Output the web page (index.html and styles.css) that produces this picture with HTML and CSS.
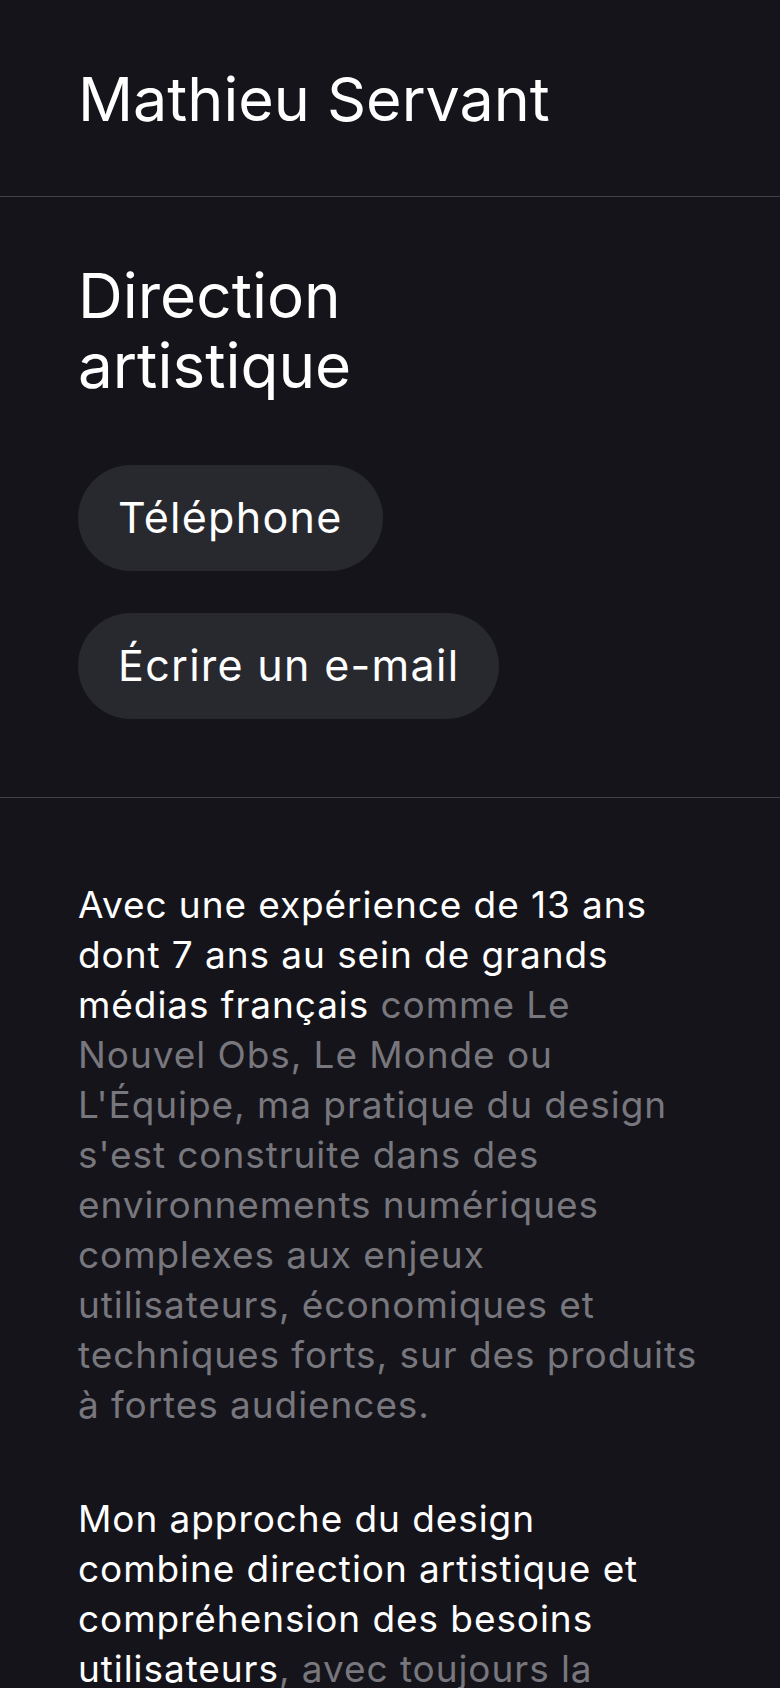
FILE: index.html
```html
<!DOCTYPE html>
<html lang="fr">
<head>
    <meta charset="UTF-8">
    <meta name="viewport" content="width=device-width, initial-scale=1.0">
    <title>Mathieu Servant — Direction artistique</title>
    <link rel="stylesheet" href="styles.css">
</head>
<body>
    <header class="top">
        <h1 class="name">Mathieu Servant</h1>
    </header>

    <section class="intro">
        <h2 class="role">Direction<br>artistique</h2>
        <div class="actions">
            <a class="pill" href="#">Téléphone</a>
            <a class="pill" href="#">Écrire un e-mail</a>
        </div>
    </section>

    <section class="about">
        <p>Avec une expérience de 13 ans dont 7 ans au sein de grands médias français <span class="muted">comme Le Nouvel Obs, Le Monde ou L'Équipe, ma pratique du design s'est construite dans des environnements numériques complexes aux enjeux utilisateurs, économiques et techniques forts, sur des produits à fortes audiences.</span></p>
        <p>Mon approche du design combine direction artistique et compréhension des besoins utilisateurs<span class="muted">, avec toujours la volonté de concevoir des interfaces claires, cohérentes et durables.</span></p>
    </section>
</body>
</html>
```

FILE: styles.css
```css
body, h1, h2, p {
    margin: 0;
    padding: 0;
}
body {
    background-color: #15141b;
    color: #fff;
    font-family: Inter, "Liberation Sans", sans-serif;
}
.top {
    padding: 64px 82px 62px 78px;
    border-bottom: 1px solid #414148;
}
.name, .role {
    font-size: 62px;
    line-height: 70px;
    font-weight: 400;
}
.name {
    font-size: 61px;
}
.intro {
    padding: 64px 82px 78px 78px;
    border-bottom: 1px solid #414148;
}
/* boutons de contact */
.actions {
    display: flex;
    flex-direction: column;
    align-items: flex-start;
    gap: 42px;
    margin-top: 64px;
}
.pill {
    padding: 26px 40px 28px;
    border-radius: 60px;
    background-color: #28292f;
    color: #fff;
    font-size: 43px;
    line-height: 52px;
    letter-spacing: 0.03em;
    text-decoration: none;
}
.about {
    padding: 82px 82px 0 78px;
}
.about p {
    margin-bottom: 64px;
    font-size: 37px;
    line-height: 50px;
    letter-spacing: 0.025em;
}
.muted {
    color: #77777d;
}
```
